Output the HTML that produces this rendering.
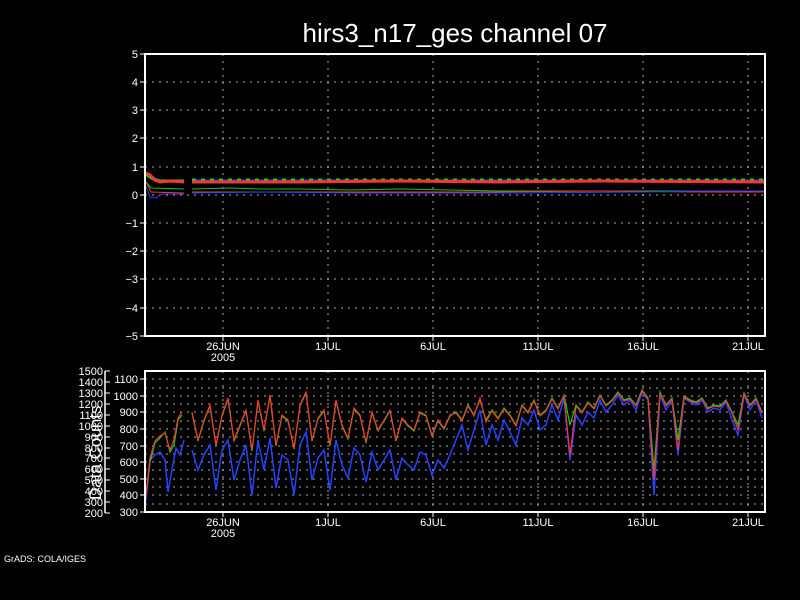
<!DOCTYPE html>
<html><head><style>
html,body{margin:0;padding:0;background:#000;width:800px;height:600px;overflow:hidden}
svg{display:block}
text{font-family:"Liberation Sans",sans-serif;fill:#fff}
</style></head><body>
<svg width="800" height="600" xmlns="http://www.w3.org/2000/svg">
<text x="455" y="42" font-size="26" text-anchor="middle">hirs3_n17_ges channel 07</text>

<!-- top grid -->
<g stroke="#aaa" stroke-dasharray="2,5">
<line x1="145" y1="82" x2="765" y2="82"/><line x1="145" y1="110" x2="765" y2="110"/>
<line x1="145" y1="138" x2="765" y2="138"/><line x1="145" y1="167" x2="765" y2="167"/>
<line x1="145" y1="195" x2="765" y2="195"/><line x1="145" y1="223" x2="765" y2="223"/>
<line x1="145" y1="251" x2="765" y2="251"/><line x1="145" y1="279" x2="765" y2="279"/>
<line x1="145" y1="308" x2="765" y2="308"/>
<line x1="223" y1="54" x2="223" y2="336"/><line x1="328" y1="54" x2="328" y2="336"/>
<line x1="433" y1="54" x2="433" y2="336"/><line x1="538" y1="54" x2="538" y2="336"/>
<line x1="643" y1="54" x2="643" y2="336"/><line x1="748" y1="54" x2="748" y2="336"/>
</g>
<g stroke="#fff">
<line x1="140" y1="54" x2="145" y2="54"/><line x1="140" y1="82" x2="145" y2="82"/><line x1="140" y1="110" x2="145" y2="110"/><line x1="140" y1="138" x2="145" y2="138"/><line x1="140" y1="167" x2="145" y2="167"/><line x1="140" y1="195" x2="145" y2="195"/><line x1="140" y1="223" x2="145" y2="223"/><line x1="140" y1="251" x2="145" y2="251"/><line x1="140" y1="279" x2="145" y2="279"/><line x1="140" y1="308" x2="145" y2="308"/><line x1="140" y1="336" x2="145" y2="336"/>
<line x1="223" y1="336" x2="223" y2="341"/><line x1="328" y1="336" x2="328" y2="341"/><line x1="433" y1="336" x2="433" y2="341"/><line x1="538" y1="336" x2="538" y2="341"/><line x1="643" y1="336" x2="643" y2="341"/><line x1="748" y1="336" x2="748" y2="341"/>
</g>
<g font-size="11" text-anchor="end">
<text x="138" y="58">5</text><text x="138" y="86">4</text><text x="138" y="114">3</text><text x="138" y="142">2</text><text x="138" y="171">1</text><text x="138" y="199">0</text><text x="138" y="227">−1</text><text x="138" y="255">−2</text><text x="138" y="283">−3</text><text x="138" y="312">−4</text><text x="138" y="340">−5</text>
</g>
<g font-size="11" text-anchor="middle">
<text x="223" y="350">26JUN</text><text x="223" y="361">2005</text><text x="328" y="350">1JUL</text><text x="433" y="350">6JUL</text><text x="538" y="350">11JUL</text><text x="643" y="350">16JUL</text><text x="748" y="350">21JUL</text>
</g>
<!-- top data -->
<g fill="none">
<polyline stroke="#33f" stroke-width="3" points="146,173 150,176 155,179 160,181 184,181"/>
<polyline stroke="#0d0" stroke-width="3" points="146,174 150,177 155,180 160,181 184,181"/>
<polyline stroke="#f33" stroke-width="3" points="146,173 150,175 155,180 160,182 170,181 184,182"/>
<polyline stroke="#33f" stroke-width="3" points="192,181 765,181"/>
<polyline stroke="#0d0" stroke-width="3" stroke-dasharray="4,5" points="192,180 765,180"/>
<polyline stroke="#f33" stroke-width="3" points="192,182 300,182 400,181 500,182 600,181 765,182"/>
<polyline stroke="#0c0" stroke-width="1" points="146,182 151,188 184,189 M"/>
<polyline stroke="#0c0" stroke-width="1" points="192,189 230,188 260,189 300,189 350,190 400,189 450,190 500,191 765,191"/>
<polyline stroke="#f33" stroke-width="1" points="146,182 151,192 184,193"/>
<polyline stroke="#f33" stroke-width="1" points="192,192 260,192 330,192 400,192 500,192 600,191 700,192 765,192"/>
<polyline stroke="#24f" stroke-width="1" points="146,186 150,197 156,198 162,194 184,194"/>
<polyline stroke="#24f" stroke-width="1" points="192,193 260,192 350,193 450,193 500,193 640,192 700,191 765,191"/>
</g>
<rect x="145" y="54" width="620" height="282" fill="none" stroke="#fff" stroke-width="2"/>

<!-- bottom grid -->
<g stroke="#aaa" stroke-dasharray="2,5">
<line x1="145" y1="504" x2="765" y2="504"/><line x1="145" y1="495" x2="765" y2="495"/><line x1="145" y1="487" x2="765" y2="487"/><line x1="145" y1="479" x2="765" y2="479"/><line x1="145" y1="470" x2="765" y2="470"/><line x1="145" y1="462" x2="765" y2="462"/><line x1="145" y1="454" x2="765" y2="454"/><line x1="145" y1="446" x2="765" y2="446"/><line x1="145" y1="437" x2="765" y2="437"/><line x1="145" y1="429" x2="765" y2="429"/><line x1="145" y1="421" x2="765" y2="421"/><line x1="145" y1="412" x2="765" y2="412"/><line x1="145" y1="404" x2="765" y2="404"/><line x1="145" y1="396" x2="765" y2="396"/><line x1="145" y1="388" x2="765" y2="388"/><line x1="145" y1="379" x2="765" y2="379"/>
<line x1="223" y1="371" x2="223" y2="512"/><line x1="328" y1="371" x2="328" y2="512"/><line x1="433" y1="371" x2="433" y2="512"/><line x1="538" y1="371" x2="538" y2="512"/><line x1="643" y1="371" x2="643" y2="512"/><line x1="748" y1="371" x2="748" y2="512"/>
</g>
<g stroke="#fff">
<line x1="140" y1="512" x2="145" y2="512"/><line x1="140" y1="495" x2="145" y2="495"/><line x1="140" y1="479" x2="145" y2="479"/><line x1="140" y1="462" x2="145" y2="462"/><line x1="140" y1="446" x2="145" y2="446"/><line x1="140" y1="429" x2="145" y2="429"/><line x1="140" y1="412" x2="145" y2="412"/><line x1="140" y1="396" x2="145" y2="396"/><line x1="140" y1="379" x2="145" y2="379"/>
<line x1="223" y1="512" x2="223" y2="517"/><line x1="328" y1="512" x2="328" y2="517"/><line x1="433" y1="512" x2="433" y2="517"/><line x1="538" y1="512" x2="538" y2="517"/><line x1="643" y1="512" x2="643" y2="517"/><line x1="748" y1="512" x2="748" y2="517"/>
<line x1="105" y1="371" x2="105" y2="513" stroke-width="1.5"/>
<line x1="105" y1="371" x2="110" y2="371"/><line x1="105" y1="382" x2="110" y2="382"/><line x1="105" y1="393" x2="110" y2="393"/><line x1="105" y1="404" x2="110" y2="404"/><line x1="105" y1="415" x2="110" y2="415"/><line x1="105" y1="426" x2="110" y2="426"/><line x1="105" y1="437" x2="110" y2="437"/><line x1="105" y1="448" x2="110" y2="448"/><line x1="105" y1="458" x2="110" y2="458"/><line x1="105" y1="469" x2="110" y2="469"/><line x1="105" y1="480" x2="110" y2="480"/><line x1="105" y1="491" x2="110" y2="491"/><line x1="105" y1="502" x2="110" y2="502"/><line x1="105" y1="513" x2="110" y2="513"/>
</g>
<g font-size="11" text-anchor="end">
<text x="138" y="516">300</text><text x="138" y="499">400</text><text x="138" y="483">500</text><text x="138" y="466">600</text><text x="138" y="450">700</text><text x="138" y="433">800</text><text x="138" y="416">900</text><text x="138" y="400">1000</text><text x="138" y="383">1100</text>
<text x="103" y="375">1500</text><text x="103" y="386">1400</text><text x="103" y="397">1300</text><text x="103" y="408">1200</text><text x="103" y="419">1100</text><text x="103" y="430">1000</text><text x="103" y="441">900</text><text x="103" y="452">800</text><text x="103" y="462">700</text><text x="103" y="473">600</text><text x="103" y="484">500</text><text x="103" y="495">400</text><text x="103" y="506">300</text><text x="103" y="517">200</text>
</g>
<text x="0" y="0" font-size="17" transform="translate(101,500) rotate(-90)">Data Counts</text>
<g font-size="11" text-anchor="middle">
<text x="223" y="526">26JUN</text><text x="223" y="537">2005</text><text x="328" y="526">1JUL</text><text x="433" y="526">6JUL</text><text x="538" y="526">11JUL</text><text x="643" y="526">16JUL</text><text x="748" y="526">21JUL</text>
</g>
<!-- bottom data -->
<g fill="none" stroke-width="1.2">
<polyline stroke="#24f" stroke-width="1.5" points="146,500 150,460 155,455 160,452 165,460 168,492 172,470 176,448 180,455 184,440"/>
<polyline stroke="#0d0" points="146,495 150,462 155,443 160,438 165,432 170,452 174,445 178,420 182,415"/>
<polyline stroke="#f33" points="146,495 150,458 155,441 160,436 165,433 170,450 174,440 178,418 182,412"/>
<polyline stroke="#24f" stroke-width="1.5" points="192,450 198,470 204,455 210,445 216,490 222,450 228,440 234,480 240,460 246,445 252,495 258,440 264,470 270,438 276,488 282,455 288,460 294,495 300,445 306,432 312,480 318,458 324,450 330,490 336,440 342,465 348,478 354,448 360,455 366,482 372,452 378,470 384,460 390,450 396,480 402,458 408,465 414,470 420,452 426,455 432,475 438,460 444,468 450,455 456,440 462,425 468,450 474,430 480,410 486,445 492,425 498,440 504,420 510,432 516,445 522,418 528,425 534,410 540,430 546,425 552,405 558,420 564,398 570,460 576,415 582,425 588,412 594,418 600,400 606,412 612,405 618,395 624,405 630,400 636,410 642,392 648,400 654,495 660,395 666,410 672,400 678,455 684,398 690,402 696,405 702,400 708,412 714,408 720,410 726,402 732,420 738,435 744,395 750,410 756,400 762,418"/>
<polyline stroke="#0d0" points="192,413 198,441 204,421 210,406 216,446 222,416 228,399 234,441 240,426 246,411 252,451 258,401 264,431 270,396 276,446 282,416 288,421 294,449 300,406 306,393 312,441 318,419 324,411 330,446 336,401 342,426 348,439 354,409 360,416 366,443 372,413 378,431 384,421 390,411 396,441 402,419 408,426 414,431 420,413 426,416 432,436 438,421 444,429 450,416 456,412 462,420 468,405 474,415 480,400 486,420 492,410 498,418 504,408 510,415 516,425 522,405 528,412 534,400 540,415 546,410 552,398 558,408 564,395 570,425 576,405 582,412 588,402 594,408 600,395 606,405 612,400 618,392 624,400 630,398 636,405 642,390 648,398 654,470 660,392 666,405 672,398 678,440 684,396 690,400 696,402 702,398 708,408 714,405 720,406 726,400 732,412 738,425 744,393 750,405 756,398 762,412"/>
<polyline stroke="#f33" points="192,412 198,440 204,420 210,405 216,445 222,415 228,398 234,440 240,425 246,410 252,450 258,400 264,430 270,395 276,445 282,415 288,420 294,448 300,405 306,392 312,440 318,418 324,410 330,445 336,400 342,425 348,438 354,408 360,415 366,442 372,412 378,430 384,420 390,410 396,440 402,418 408,425 414,430 420,412 426,415 432,435 438,420 444,428 450,415 456,413 462,421 468,406 474,416 480,398 486,422 492,411 498,419 504,409 510,416 516,426 522,406 528,413 534,401 540,416 546,411 552,399 558,409 564,396 570,455 576,406 582,413 588,403 594,409 600,396 606,406 612,401 618,393 624,401 630,399 636,406 642,391 648,399 654,480 660,393 666,406 672,399 678,450 684,397 690,401 696,403 702,399 708,409 714,406 720,407 726,401 732,413 738,430 744,394 750,406 756,399 762,413"/>
</g>
<rect x="145" y="371" width="620" height="141" fill="none" stroke="#fff" stroke-width="2"/>
<text x="4" y="562" font-size="9">GrADS: COLA/IGES</text>
</svg>
</body></html>
